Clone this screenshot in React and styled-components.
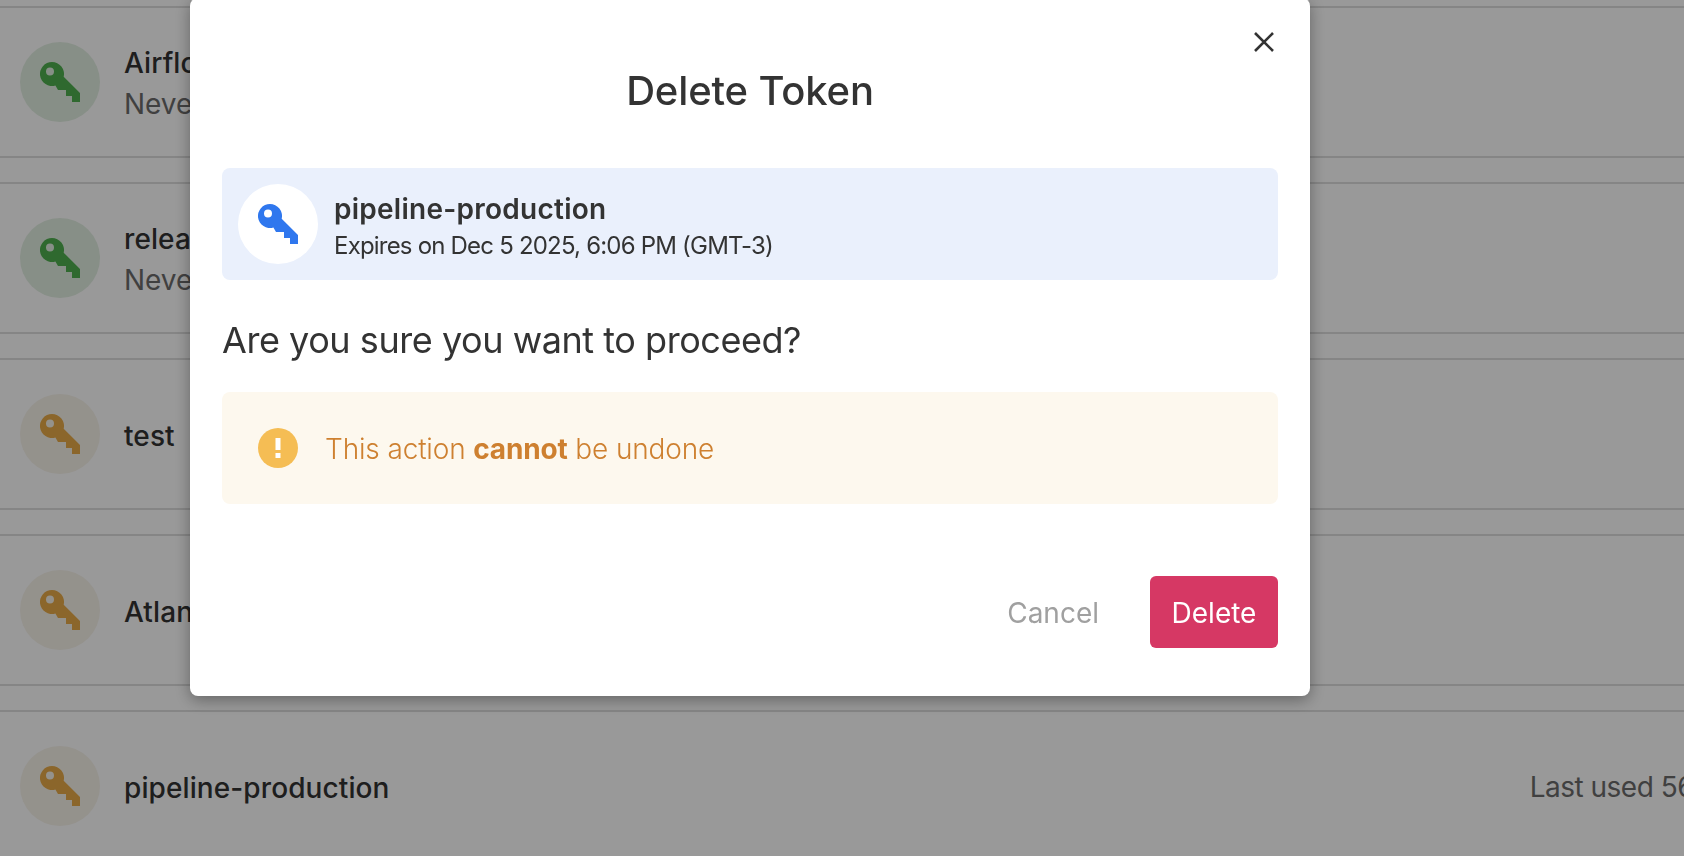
import React from 'react';
import styled, { createGlobalStyle } from 'styled-components';

const GlobalStyle = createGlobalStyle`
  html, body {
    margin: 0;
    height: 100%;
    overflow: hidden;
    background: #fff;
  }
  * {
    box-sizing: border-box;
  }
  body {
    font-family: Inter, "Noto Sans", sans-serif;
    color: #333;
  }
`;

const tokens = [
  { name: 'Airflow', note: 'Never expires', tone: 'green' },
  { name: 'release', note: 'Never expires', tone: 'green' },
  { name: 'test', tone: 'amber' },
  { name: 'Atlantis', tone: 'amber' },
  { name: 'pipeline-production', used: 'Last used 56 days ago', tone: 'amber' },
];

const tones = {
  green: { key: '#4fb04f', circle: '#e2efe2' },
  amber: { key: '#e8ab48', circle: '#f7f3ea' },
  blue: { key: '#2f77ee', circle: '#fff' },
};

const List = styled.div`
  width: 1838px;
  padding-top: 6px;
  display: flex;
  flex-direction: column;
  gap: 24px;
`;

const Row = styled.div`
  height: 152px;
  flex: none;
  display: flex;
  align-items: center;
  gap: 24px;
  padding: 0 20px;
  border-top: 2px solid #dedede;
  border-bottom: 2px solid #dedede;
`;

const KeyCircle = styled.div`
  width: 80px;
  height: 80px;
  flex: none;
  border-radius: 50%;
  display: flex;
  align-items: center;
  justify-content: center;
  background: ${(p) => tones[p.$tone].circle};
  color: ${(p) => tones[p.$tone].key};
`;

const RowText = styled.div`
  display: flex;
  flex-direction: column;
  gap: 7px;
  padding-top: 3px;
`;

const RowName = styled.div`
  font-size: 28px;
  line-height: 34px;
  font-weight: 500;
  letter-spacing: 0.1px;
`;

const RowNote = styled.div`
  font-size: 28px;
  line-height: 34px;
  color: #6c6c6c;
`;

const LastUsed = styled.div`
  margin-left: auto;
  padding-top: 2px;
  font-size: 28px;
  letter-spacing: -0.5px;
  color: #6c6c6c;
  white-space: nowrap;
`;

/* the dialog sits centred on the content column, not on the whole window */
const Overlay = styled.div`
  position: fixed;
  inset: 0;
  padding-right: 184px;
  background: rgba(0, 0, 0, 0.4);
  display: flex;
  justify-content: center;
  align-items: flex-start;
`;

const Modal = styled.div`
  position: relative;
  width: 1120px;
  flex: none;
  margin-top: -2px;
  padding: 0 32px 48px;
  background: #fff;
  border-radius: 8px;
  box-shadow: 0 4px 16px rgba(0, 0, 0, 0.35);
`;

const CloseButton = styled.button`
  position: absolute;
  top: 28px;
  right: 30px;
  width: 32px;
  height: 32px;
  padding: 0;
  border: 0;
  background: none;
  color: #333;
  display: flex;
  align-items: center;
  justify-content: center;
`;

const Title = styled.h2`
  margin: 0;
  padding-top: 67px;
  height: 170px;
  text-align: center;
  font-size: 40px;
  line-height: 52px;
  font-weight: 500;
  letter-spacing: -0.15px;
  color: #333;
`;

const TokenPanel = styled.div`
  height: 112px;
  padding: 0 16px;
  display: flex;
  align-items: center;
  gap: 16px;
  border-radius: 8px;
  background: #eaf0fc;
`;

const TokenText = styled.div`
  display: flex;
  flex-direction: column;
  gap: 3px;
  padding-top: 4px;
`;

const TokenName = styled.div`
  font-size: 28px;
  line-height: 36px;
  font-weight: 600;
  letter-spacing: 0.26px;
`;

const TokenExpiry = styled.div`
  font-size: 24px;
  line-height: 32px;
  letter-spacing: -0.8px;
`;

const Question = styled.p`
  margin: 0;
  height: 112px;
  padding-top: 8px;
  display: flex;
  align-items: center;
  font-size: 36px;
  font-weight: 400;
  letter-spacing: -0.45px;
`;

const WarningPanel = styled.div`
  height: 112px;
  padding: 0 36px;
  display: flex;
  align-items: center;
  gap: 27px;
  border-radius: 8px;
  background: #fdf8ee;
  color: #ce8030;
  font-size: 28px;
  font-weight: 300;
  letter-spacing: -0.15px;

  span {
    padding-top: 2px;
  }

  strong {
    font-weight: 700;
  }
`;

const WarningDot = styled.div`
  width: 40px;
  height: 40px;
  flex: none;
  border-radius: 50%;
  background: #f5bd54;
  display: flex;
  align-items: center;
  justify-content: center;
`;

const Actions = styled.div`
  margin-top: 72px;
  display: flex;
  justify-content: flex-end;
  align-items: center;
  gap: 51px;
`;

const ActionButton = styled.button`
  height: 72px;
  min-width: ${(p) => (p.$primary ? '128px' : '0')};
  padding: 2px 0 0;
  border: 0;
  border-radius: 6px;
  font-family: inherit;
  font-size: 28px;
  font-weight: 400;
  background: ${(p) => (p.$primary ? '#d63864' : 'transparent')};
  color: ${(p) => (p.$primary ? '#fff' : '#a0a0a0')};
`;

const KeyIcon = () => (
  <svg width="40" height="40" viewBox="0 0 40 40" fill="currentColor">
    <path
      fillRule="evenodd"
      d="M12 0a12 12 0 0 1 11.7 14.7L40 31v9h-8v-6h-6v-6h-8l-2.6-4.5A12 12 0 1 1 12 0zM10 5.5a4 4 0 1 0 0 8 4 4 0 0 0 0-8z"
    />
  </svg>
);

const CloseIcon = () => (
  <svg width="20" height="20" viewBox="0 0 20 20" fill="none" stroke="currentColor" strokeWidth="2.6">
    <path d="M1 1l18 18M19 1L1 19" />
  </svg>
);

const BangIcon = () => (
  <svg width="6" height="24" viewBox="0 0 6 24" fill="#fff">
    <path d="M0.5 2h5v12h-5zM0.5 17h5v5h-5z" />
  </svg>
);

const App = () => (
  <>
    <GlobalStyle />
    <List>
      {tokens.map((t) => (
        <Row key={t.name}>
          <KeyCircle $tone={t.tone}>
            <KeyIcon />
          </KeyCircle>
          <RowText>
            <RowName>{t.name}</RowName>
            {t.note && <RowNote>{t.note}</RowNote>}
          </RowText>
          {t.used && <LastUsed>{t.used}</LastUsed>}
        </Row>
      ))}
    </List>
    <Overlay>
      <Modal>
        <CloseButton aria-label="Close">
          <CloseIcon />
        </CloseButton>
        <Title>Delete Token</Title>
        <TokenPanel>
          <KeyCircle $tone="blue">
            <KeyIcon />
          </KeyCircle>
          <TokenText>
            <TokenName>pipeline-production</TokenName>
            <TokenExpiry>Expires on Dec 5 2025, 6:06 PM (GMT-3)</TokenExpiry>
          </TokenText>
        </TokenPanel>
        <Question>Are you sure you want to proceed?</Question>
        <WarningPanel>
          <WarningDot>
            <BangIcon />
          </WarningDot>
          <span>
            This action <strong>cannot</strong> be undone
          </span>
        </WarningPanel>
        <Actions>
          <ActionButton>Cancel</ActionButton>
          <ActionButton $primary>Delete</ActionButton>
        </Actions>
      </Modal>
    </Overlay>
  </>
);

export default App;
